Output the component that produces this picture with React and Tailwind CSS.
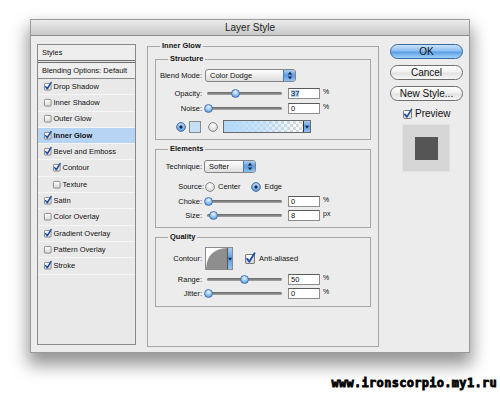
import React, { useId } from "react";

function CheckBox({ checked, size = 8 }) {
  const id = useId();
  return (
    <svg width={size} height={size} viewBox="0 0 9 9" className="shrink-0 overflow-visible">
      <defs>
        <linearGradient id={id} x1="0" y1="0" x2="0" y2="1">
          <stop offset="0" stopColor="#ffffff" />
          <stop offset="1" stopColor="#d8d8d8" />
        </linearGradient>
      </defs>
      <rect x="0.5" y="0.5" width="8" height="8" rx="1" fill={`url(#${id})`} stroke="#7a7a7a" />
      {checked && (
        <path d="M1.9 4.4 L3.9 6.9 L8.6 -0.6" fill="none" stroke="#1f4f9e" strokeWidth="1.7" strokeLinecap="round" strokeLinejoin="round" />
      )}
    </svg>
  );
}

function Radio({ on }) {
  const id = useId();
  return (
    <svg width="10" height="10" viewBox="0 0 10 10" className="shrink-0">
      <defs>
        <radialGradient id={id} cx="0.5" cy="0.35" r="0.6">
          <stop offset="0" stopColor={on ? "#d8ecff" : "#ffffff"} />
          <stop offset="1" stopColor={on ? "#5a98dc" : "#d6d6d6"} />
        </radialGradient>
      </defs>
      <circle cx="5" cy="5" r="4.4" fill={`url(#${id})`} stroke={on ? "#3d6aa6" : "#7c7c7c"} strokeWidth="0.9" />
      {on && <circle cx="5" cy="5" r="1.7" fill="#1b2a44" />}
    </svg>
  );
}

function Stepper() {
  return (
    <div className="w-[12px] h-full rounded-r-[3px] bg-gradient-to-b from-[#a9cdf2] via-[#5d9be0] to-[#8ec3f5] border-l border-[#4a78b0] flex items-center justify-center">
      <svg width="6" height="9" viewBox="0 0 6 9">
        <path d="M3 0.8 L5.2 3.4 L0.8 3.4 Z" fill="#13233d" />
        <path d="M3 8.2 L5.2 5.6 L0.8 5.6 Z" fill="#13233d" />
      </svg>
    </div>
  );
}

function Select({ w, text }) {
  return (
    <div className={`${w} h-[13px] flex items-stretch rounded-[3px] border border-[#858585] bg-gradient-to-b from-[#ffffff] to-[#dedede] shrink-0`}>
      <div className="flex-1 pl-[4px] flex items-center text-[7.5px] leading-none">{text}</div>
      <Stepper />
    </div>
  );
}

function Slider({ pos }) {
  return (
    <div className="relative w-[80px] h-[11px] shrink-0">
      <div className="absolute left-[3px] right-[2px] top-[4px] h-[3px] rounded-full bg-gradient-to-b from-[#666666] to-[#a8a8a8]" />
      <div
        className="absolute top-[1px] w-[9px] h-[9px] rounded-full border border-[#4777b3] bg-[radial-gradient(circle_at_50%_30%,#f0f7ff,#8cbcee_55%,#3f7cc4)]"
        style={{ left: pos }}
      />
    </div>
  );
}

function NumInput({ value, sel, unit }) {
  return (
    <>
      <div className="ml-[4px] w-[32px] h-[11px] bg-white border border-[#8d8d8d] border-t-[#5a5a5a] flex items-center pl-[2px] text-[7.5px] leading-none shrink-0">
        <span className={sel ? "bg-[#b5d3f5]" : ""}>{value}</span>
      </div>
      <span className="ml-[3px] text-[7px] leading-none self-start">{unit}</span>
    </>
  );
}

function SliderRow({ label, pos, value, sel, unit = "%", mt }) {
  return (
    <div className={`flex items-center h-[11px] ${mt}`}>
      <div className="w-[46px] text-right text-[7.5px] leading-none">{label}</div>
      <div className="ml-[2px]">
        <Slider pos={pos} />
      </div>
      <NumInput value={value} sel={sel} unit={unit} />
    </div>
  );
}

function Group({ title, className = "", children }) {
  return (
    <fieldset className={`border border-[#a6a6a6] ${className}`}>
      <legend className="ml-[12px] px-[2px] text-[7.5px] leading-[8px] font-bold">{title}</legend>
      {children}
    </fieldset>
  );
}

const items = [
  { t: "Drop Shadow", c: true },
  { t: "Inner Shadow", c: false },
  { t: "Outer Glow", c: false },
  { t: "Inner Glow", c: true, sel: true },
  { t: "Bevel and Emboss", c: true },
  { t: "Contour", c: true, ind: true },
  { t: "Texture", c: false, ind: true },
  { t: "Satin", c: true },
  { t: "Color Overlay", c: false },
  { t: "Gradient Overlay", c: true },
  { t: "Pattern Overlay", c: false },
  { t: "Stroke", c: true },
];

function Button({ children, primary }) {
  return (
    <div
      className={`w-[73px] h-[15px] rounded-full border flex items-center justify-center text-[10px] leading-none ${
        primary
          ? "border-[#3b69a3] bg-[linear-gradient(to_bottom,#c9e2fb_0%,#8cc0f0_45%,#5e9fe4_55%,#9fd3fb_100%)]"
          : "border-[#6f6f6f] bg-[linear-gradient(to_bottom,#ffffff_0%,#f2f2f2_45%,#e2e2e2_55%,#f7f7f7_100%)]"
      }`}
    >
      {children}
    </div>
  );
}

export default function App() {
  return (
    <div className="w-[500px] h-[395px] bg-white overflow-hidden pl-[30px] pt-[19px] text-[#111] font-['Liberation_Sans',Arial,sans-serif]">
      <div className="w-[440px] h-[334px] border border-[#9a9a9a] bg-[#ececec] flex flex-col shadow-[0_10px_16px_2px_rgba(0,0,0,0.42)]">
        {/* title bar */}
        <div className="h-[16px] shrink-0 border-b border-[#8a8a8a] bg-gradient-to-b from-[#ececec] to-[#c9c9c9] flex items-center justify-center text-[10px] leading-none text-[#222]">
          Layer Style
        </div>
        {/* body */}
        <div className="flex items-start pl-[6px] pt-[8px]">
          {/* left list */}
          <div className="w-[99px] h-[301px] border border-[#8a8a8a] bg-[#e9e9e9] flex flex-col shrink-0">
            <div className="h-[15px] pl-[4px] flex items-center text-[7.5px] leading-none bg-[#eeeeee]">Styles</div>
            <div className="h-[3px] border-y border-[#6e6e6e]" />
            <div className="h-[16px] pl-[4px] flex items-center text-[7.5px] leading-none border-b border-[#8a8a8a] bg-[#eeeeee]">
              Blending Options: Default
            </div>
            {items.map((it) => (
              <div
                key={it.t}
                className={`h-[16.3px] shrink-0 flex items-center gap-[2px] border-b border-[#f6f6f6] ${
                  it.ind ? "pl-[15px]" : "pl-[6px]"
                } ${it.sel ? "bg-[#b8d4f4]" : ""}`}
              >
                <CheckBox checked={it.c} size={7.5} />
                <span className={`text-[7.5px] leading-none ${it.sel ? "font-bold" : ""}`}>{it.t}</span>
              </div>
            ))}
          </div>

          {/* middle */}
          <div className="ml-[11px] -mt-[2px] w-[232px] shrink-0">
            <Group title="Inner Glow" className="h-[305px]">
              <Group title="Structure" className="mt-[5px] mx-[7px] pb-[6px]">
                <div className="flex items-center h-[13px] mt-[6px]">
                  <div className="w-[46px] text-right text-[7.5px] leading-none">Blend Mode:</div>
                  <div className="ml-[3px]">
                    <Select w="w-[91px]" text="Color Dodge" />
                  </div>
                </div>
                <SliderRow label="Opacity:" pos={27} value="37" sel mt="mt-[6px]" />
                <SliderRow label="Noise:" pos={0} value="0" mt="mt-[4px]" />
                <div className="flex items-center h-[13px] mt-[6px]">
                  <div className="ml-[20px]">
                    <Radio on />
                  </div>
                  <div className="ml-[3px] w-[12px] h-[12px] border border-[#8a8a8a] bg-[#c4e0f7]" />
                  <div className="ml-[7px]">
                    <Radio />
                  </div>
                  <div className="ml-[5px] w-[88px] h-[13px] flex border border-[#6a6a6a]">
                    <div className="flex-1 [background-image:linear-gradient(to_right,#b3d9fb_0%,rgba(179,217,251,0.7)_45%,rgba(179,217,251,0)_100%),repeating-conic-gradient(#d8d8d8_0_25%,#ffffff_0_50%)] [background-size:100%_100%,6px_6px]" />
                    <div className="w-[7px] border-l border-[#333] bg-gradient-to-b from-[#a9cdf2] via-[#5d9be0] to-[#8ec3f5] flex items-center justify-center">
                      <svg width="4" height="4" viewBox="0 0 4 4">
                        <path d="M0 0.8 L4 0.8 L2 3.4 Z" fill="#13233d" />
                      </svg>
                    </div>
                  </div>
                </div>
              </Group>

              <Group title="Elements" className="mt-[5px] mx-[7px] pb-[6px]">
                <div className="flex items-center h-[13px] mt-[7px]">
                  <div className="w-[46px] text-right text-[7.5px] leading-none">Technique:</div>
                  <div className="ml-[2px]">
                    <Select w="w-[52px]" text="Softer" />
                  </div>
                </div>
                <div className="flex items-center h-[10px] mt-[9px] text-[7.5px] leading-none">
                  <div className="w-[48px] text-right">Source:</div>
                  <div className="ml-[1px]">
                    <Radio />
                  </div>
                  <span className="ml-[3px]">Center</span>
                  <div className="ml-[10px]">
                    <Radio on />
                  </div>
                  <span className="ml-[4px]">Edge</span>
                </div>
                <SliderRow label="Choke:" pos={0} value="0" mt="mt-[4px]" />
                <SliderRow label="Size:" pos={5} value="8" unit="px" mt="mt-[3px]" />
              </Group>

              <Group title="Quality" className="mt-[5px] mx-[7px] pb-[7px]">
                <div className="flex items-center h-[23px] mt-[6px]">
                  <div className="w-[46px] text-right text-[7.5px] leading-none">Contour:</div>
                  <div className="ml-[3px] w-[28px] h-[23px] flex border border-[#8a8a8a] bg-white shrink-0">
                    <svg width="21" height="21" viewBox="0 0 21 21" className="shrink-0">
                      <path d="M0 21 Q1 1 21 0 L21 21 Z" fill="#8e8e8e" />
                    </svg>
                    <div className="flex-1 border-l border-[#555] bg-gradient-to-b from-[#a9cdf2] via-[#5d9be0] to-[#8ec3f5] flex items-center justify-center">
                      <svg width="4" height="4" viewBox="0 0 4 4">
                        <path d="M0 0.8 L4 0.8 L2 3.4 Z" fill="#13233d" />
                      </svg>
                    </div>
                  </div>
                  <div className="ml-[12px]">
                    <CheckBox checked size={10} />
                  </div>
                  <span className="ml-[4px] text-[7.5px] leading-none">Anti-aliased</span>
                </div>
                <SliderRow label="Range:" pos={36} value="50" mt="mt-[4px]" />
                <SliderRow label="Jitter:" pos={0} value="0" mt="mt-[3px]" />
              </Group>
            </Group>
          </div>

          {/* right column */}
          <div className="pl-[11px] flex flex-col">
            <Button primary>OK</Button>
            <div className="mt-[6px]">
              <Button>Cancel</Button>
            </div>
            <div className="mt-[6px]">
              <Button>New Style...</Button>
            </div>
            <div className="mt-[8px] ml-[13px] flex items-center h-[10px]">
              <CheckBox checked size={9} />
              <span className="ml-[3px] text-[10px] leading-none">Preview</span>
            </div>
            <div className="mt-[5px] ml-[12px] w-[48px] h-[48px] bg-[#d5d5d5] border border-[#e2e2e2] flex items-center justify-center">
              <div className="w-[23px] h-[23px] bg-[#555555]" />
            </div>
          </div>
        </div>
      </div>

      <div className="mt-[24px] w-[467px] flex justify-end">
        <span className="font-['DejaVu_Sans_Mono',monospace] font-bold text-[12px] leading-[12px] tracking-[0.3px] text-black [-webkit-text-stroke:0.8px_#000] [text-shadow:0_0_1px_#fff]">
          www.ironscorpio.my1.ru
        </span>
      </div>
    </div>
  );
}
